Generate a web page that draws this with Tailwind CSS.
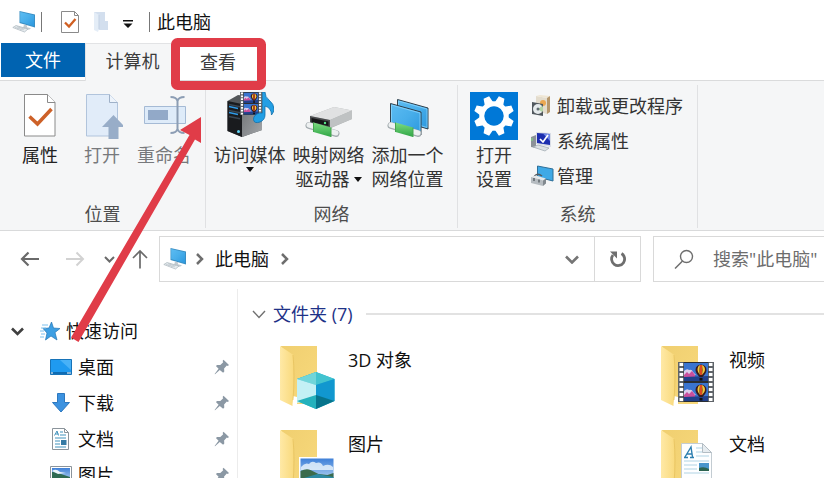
<!DOCTYPE html>
<html lang="zh-CN">
<head>
<meta charset="utf-8">
<meta name="viewport" content="width=device-width, initial-scale=1">
<title>此电脑</title>
<script src="https://cdn.jsdelivr.net/npm/@tailwindcss/browser@4"></script>
</head>
<body class="relative flex h-screen flex-col overflow-hidden bg-white font-['Open_Sans','Noto_Sans_CJK_SC',sans-serif] text-lg leading-6 text-[#111]">

<!-- Shared drawings -->
<svg class="absolute size-0" aria-hidden="true">
  <defs>
    <linearGradient id="screen" x1="0" y1="0" x2="1" y2="1"><stop offset="0" stop-color="#5cbcf2"/><stop offset=".5" stop-color="#48aeea"/><stop offset="1" stop-color="#2b97de"/></linearGradient>
    <linearGradient id="flap" x1="0" y1="0" x2="1" y2="0"><stop offset="0" stop-color="#ffe9a6"/><stop offset="1" stop-color="#f9da7e"/></linearGradient>
    <linearGradient id="back" x1="0" y1="0" x2="1" y2="1"><stop offset="0" stop-color="#f0cf70"/><stop offset="1" stop-color="#f8d97c"/></linearGradient>
    <linearGradient id="pipe" x1="0" y1="0" x2="0" y2="1"><stop offset="0" stop-color="#7ddc82"/><stop offset="1" stop-color="#2fa545"/></linearGradient>
    <linearGradient id="sky" x1="0" y1="0" x2="0" y2="1"><stop offset="0" stop-color="#3f80d8"/><stop offset="1" stop-color="#c4e0f7"/></linearGradient>
    <linearGradient id="tower" x1="0" y1="0" x2="1" y2="1"><stop offset="0" stop-color="#6c6f72"/><stop offset="1" stop-color="#a4a7aa"/></linearGradient>
    <symbol id="pc" viewBox="0 0 24 22">
      <path d="M7.500 0 23 3.500v13L7.500 12z" fill="#3a8fc4"/>
      <path d="M8.200 1 22 4.200v11L8.200 11z" fill="url(#screen)"/>
      <path d="M12 13.500l3 .8v2l4 1-2 1.500-6-1.600z" fill="#c3cbd1"/>
      <path d="M.8 16.500 4 14.500l12 3.500-3.500 3z" fill="#e7ecef" stroke="#a9b4bc" stroke-width=".7"/>
      <path d="M3 16.300l9 2.500M5 15.500l8 2.200M5 18l3-2M8 19l3-2" stroke="#b5bfc6" stroke-width=".6" fill="none"/>
    </symbol>
    <symbol id="folder" viewBox="0 0 38 64">
      <path d="M1 0h36v58H13z" fill="url(#back)"/>
      <path d="M13 50l4 1v10h-4z" fill="#fff"/>
      <path d="M0 0 13.500 9v39q0 4-1 6v6L0 54z" fill="url(#flap)"/>
      <path d="M13 9q2 20 0 45" stroke="#e4bf5a" stroke-width=".7" fill="none"/>
    </symbol>
    <symbol id="frame" viewBox="0 0 24 18">
      <path d="M0 0h24v18H0z" fill="#3a74cf"/>
      <path d="M0 8q3-3 5-1 3-1 4 2l3 3H0z" fill="#d9cdea"/>
      <path d="M0 12l3-3 2 2 3-3 3 4v2H0z" fill="#c94f9c"/>
      <path d="M0 14l24-1v5H0z" fill="#22408a"/>
      <path d="M11.500 7a5.500 5.500 0 0 1 11 0q0 3-4 7h-3q-4-4-4-7z" fill="#3a1c1c"/>
      <path d="M13.500 7q0-4 2.500-5-1 7 0 10-2.500-3-2.500-5zM18 2q3 1 3 5 0 2-3 5 1-5 0-10z" fill="#f5c63a"/>
      <path d="M16 2h2v10h-2z" fill="#dc4a22"/><path d="M15.500 15h3v2.500h-3z" fill="#111"/>
    </symbol>
    <symbol id="film" viewBox="0 0 36 40">
      <path d="M0 0h36v40H0z" fill="#5f6469"/>
      <path d="M3.500 1v38M32.500 1v38" stroke="#fff" stroke-width="4" stroke-dasharray="3 2"/>
      <path d="M5.500 0h25v40h-25z" fill="#2a2e33"/>
      <use href="#frame" x="6" y="1" width="24" height="18"/><use href="#frame" x="6" y="21" width="24" height="18"/>
    </symbol>
    <symbol id="photo" viewBox="0 0 36 28">
      <path d="M0 0h36v28H0z" fill="#fff"/><path d="M1.500 1.500h33v25h-33z" fill="url(#sky)"/>
      <path d="M2 10q4-5 8-3 3-4 7-1 5-2 7 3 6-3 10 1v3H2z" fill="#eef6fc" opacity=".8"/>
      <path d="M1.500 14q6-3 10-1l8 4 9 1 6-2v10h-33z" fill="#3b6b4c"/>
      <path d="M1.500 22l17-5 16 3v6.500h-33z" fill="#2c8aa3"/>
    </symbol>
    <symbol id="pin" viewBox="0 0 16 16">
      <path d="M9.500.8 15 6l-1.200 1-1-.4-2.700 3 .2 3-1.200 1.100L5.800 11 1 15.300.6 15l4-5.200L1.900 7l1.200-1.100 3.200.1L9.200 3.200 8.600 2z" fill="#8b98a4"/>
    </symbol>
    <symbol id="pipeline" viewBox="0 0 36 18">
      <path d="M4 4.500 31 12.500" stroke="#a3abaf" stroke-width="7" stroke-linecap="round"/>
      <path d="M4 4 31 12" stroke="#edf0f1" stroke-width="5" stroke-linecap="round"/>
      <path d="M8.500 1.500 26 6.500v9.500L8.500 11z" fill="url(#pipe)"/>
      <path d="M8.500 1.500v9.500M26 6.500v9.500" stroke="#45a44f" stroke-width="1"/>
    </symbol>
  </defs>
</svg>

<header class="flex h-[43px] shrink-0 items-center pl-3">
  <svg class="h-[22px] w-6"><use href="#pc"/></svg>
  <span class="ml-[5px] h-5 w-px bg-[#777]"></span>
  <button aria-label="属性" class="ml-[19px]">
    <svg class="h-[22px] w-[18px]" viewBox="0 0 18 22"><path d="M.5.500h13l4 4v17H.500z" fill="#fff" stroke="#8a8a8a"/><path d="M13.500.5v4h4" fill="none" stroke="#8a8a8a"/><path d="M4 11.500l4 4 6.500-7.500" fill="none" stroke="#d05f22" stroke-width="2.300"/></svg>
  </button>
  <button aria-label="新建文件夹" class="ml-[15px]">
    <svg class="h-5 w-[15px]" viewBox="0 0 15 20"><path d="M0 0h11v9h3v9H4z" fill="#d3dfee"/><path d="M0 0l5 3v14l-1 3-4-2z" fill="#e4edf7"/><path d="M5 3v14" stroke="#c3d1e3"/></svg>
  </button>
  <button aria-label="自定义快速访问工具栏" class="ml-[14px]">
    <svg class="mt-1 h-2 w-[10px]" viewBox="0 0 10 8"><path d="M0 0h10v1.500H0zM.5 3.500h9L5 8z" fill="#111"/></svg>
  </button>
  <span class="ml-4 h-5 w-px bg-[#777]"></span>
  <h1 class="ml-[7px]">此电脑</h1>
</header>

<nav class="flex h-[38px] shrink-0 text-[#3c3c3c]" aria-label="功能区选项卡">
  <div class="flex border-b border-[#dadbdc] pb-[3px] pl-px">
    <button class="w-[84px] bg-[#0063b1] text-white">文件</button>
  </div>
  <button class="w-[94px] border-l border-t border-[#e2e3e5] bg-[#f5f6f7] pb-[3px]">计算机</button>
  <button class="w-[78px] border-b border-[#dadbdc]">查看</button>
  <div class="flex-1 border-b border-[#dadbdc]"></div>
</nav>

<section class="flex h-[150px] shrink-0 border-b border-[#d9dadb] bg-[#f5f6f7] pt-1 pb-[2px] text-[#333]" aria-label="功能区">
  <div class="flex w-[206px] flex-col border-r border-[#e0e1e3] pt-[7px]">
    <div class="flex flex-1 pl-[9px]">
      <button class="flex w-[62px] flex-col items-center gap-[3px] text-[#222]">
        <svg class="h-12 w-9" viewBox="0 0 36 48"><path d="M2.500 2.500h23l7.500 8v33.500H2.500z" fill="#fff" stroke="#8a8a8a"/><path d="M25.500 2.500v8H33" fill="#fff" stroke="#8a8a8a"/><path d="M7.500 24.500l8 7.500 14-15" fill="none" stroke="#cd6128" stroke-width="3.500"/></svg>
        <span>属性</span>
      </button>
      <button class="flex w-[62px] flex-col items-center gap-[3px] text-[#77797c]">
        <svg class="h-12 w-[42px]" viewBox="0 0 42 48"><path d="M5.500 2.500h23l8 8v33.500h-31z" fill="#e1ecf9" stroke="#b1c4dc"/><path d="M28.500 2.500v8h8" fill="#eef4fb" stroke="#9fb1c8"/><path d="M32.500 23 44 35h-6.500v12h-10V35H21z" fill="#98adc8"/></svg>
        <span>打开</span>
      </button>
      <button class="flex w-[62px] flex-col items-center gap-[3px] text-[#77797c]">
        <svg class="h-12 w-[44px]" viewBox="0 0 44 48"><path d="M2.500 14.500h41v17h-41z" fill="#deebf9" stroke="#a5bad5"/><path d="M6 18h20v10H6z" fill="#92a9c8"/><path d="M28.500 5q6 0 7 4v28q-1 4-7 4M42.500 5q-6 0-7 4v28q1 4 7 4" fill="none" stroke="#8c9db4" stroke-width="2"/></svg>
        <span>重命名</span>
      </button>
    </div>
    <h2 class="pb-[2px] text-center text-[#4d4d4d]">位置</h2>
  </div>

  <div class="flex w-[252px] flex-col border-r border-[#e0e1e3] pt-[7px]">
    <div class="flex flex-1 pl-1">
      <button class="flex w-[79px] flex-col items-center gap-[3px]">
        <svg class="h-12 w-12" viewBox="0 0 48 48">
          <path d="M1.500 9 12 3l24 3v32L16 45 1.500 39z" fill="#55585b"/><path d="M16 12l20-5v31l-20 7z" fill="url(#tower)"/><path d="M1.500 9 16 12v33L1.500 39z" fill="#191b1e"/>
          <path d="M3 12.500l11 2.300M3 18.500l11 2.300M3 24.500l11 2.300" stroke="#3a4652" stroke-width="1.500"/><path d="M3 14.500l9 2M3 20.500l9 2" stroke="#2f9be8" stroke-width="1.300"/><circle cx="12.500" cy="39.500" r="1.500" fill="#5ed3f5"/>
          <svg x="14" y="0" width="22" height="23" preserveAspectRatio="none" viewBox="0 0 36 40"><use href="#film" width="36" height="40"/></svg>
          <path d="M36.500 0h2.500q0 5 4 8 5 4 5 9 0 3-2.500 6 0-7-6.500-9v9q0 5-5 7-6 2-6.500-2.500 0-5 6-6.500h3z" fill="#239fe4" stroke="#0f6fab" stroke-width=".8"/>
        </svg>
        <span class="flex flex-col items-center">访问媒体<svg class="h-[5px] w-2" viewBox="0 0 8 5"><path d="M0 0h8L4 5z" fill="#111"/></svg></span>
      </button>
      <button class="flex w-[79px] flex-col items-center gap-[3px]">
        <svg class="h-12 w-12" viewBox="0 0 48 48">
          <path d="M5 24 29 15l18 3.500V27L26 36 5 31z" fill="#aeb1b2"/><path d="M5 24 29 15l18 3.500L25 28z" fill="#e0e1e2"/><path d="M25 28l22-9.500V27L25 36z" fill="#bfc2c3"/><path d="M5 24l20 4v8L5 31.500z" fill="#4b4d4f"/><path d="M6.500 26l17 3.500v4.500L6.500 30z" fill="#151617"/><circle cx="20" cy="31" r="1.200" fill="#59e38a"/>
          <use href="#pipeline" x="0" y="29" width="36" height="18"/>
        </svg>
        <span>映射网络<br><span class="flex items-center justify-center gap-1">驱动器<svg class="h-[5px] w-2" viewBox="0 0 8 5"><path d="M0 0h8L4 5z" fill="#111"/></svg></span></span>
      </button>
      <button class="flex w-[79px] flex-col items-center gap-[3px]">
        <svg class="h-12 w-12" viewBox="0 0 48 48">
          <path d="M13.500 7.500 44 16v21L13.500 28z" fill="url(#screen)" stroke="#31404b"/><path d="M14.500 9 43 17v18.500L14.500 27z" fill="none" stroke="#92d9ff" stroke-width=".7"/>
          <path d="M6.500 11.500 37 20v23L6.500 34z" fill="url(#screen)" stroke="#31404b"/><path d="M7.500 13 36 21v20.500L7.500 33.300z" fill="none" stroke="#92d9ff" stroke-width=".7"/>
          <use href="#pipeline" x="3" y="29" width="36" height="18"/>
        </svg>
        <span>添加一个<br>网络位置</span>
      </button>
    </div>
    <h2 class="pb-[2px] text-center text-[#4d4d4d]">网络</h2>
  </div>

  <div class="flex w-[240px] flex-col border-r border-[#e0e1e3] pt-[7px]">
    <div class="flex flex-1 items-start pl-3">
      <button class="flex w-12 flex-col items-center gap-[3px]">
        <svg class="size-12" viewBox="0 0 48 48">
          <path d="M0 0h48v48H0z" fill="#0078d7"/>
          <g transform="translate(24 24) rotate(22.500)" fill="#fff">
            <g id="teeth"><path d="M-4.500-13-3-20h6L4.500-13zM-4.500 13l1.500 7h6l1.500-7zM-13-4.500l-7 1.500v6l7 1.500zM13-4.500l7 1.500v6l-7 1.500z"/></g>
            <use href="#teeth" transform="rotate(45)"/>
            <circle r="12.200" fill="none" stroke="#fff" stroke-width="5"/>
          </g>
        </svg>
        <span>打开<br>设置</span>
      </button>
      <div class="flex flex-col gap-[11px] pt-[2px] pl-3">
        <button class="flex items-center gap-[3px]">
          <svg class="h-[22px] w-6" viewBox="0 0 24 22"><path d="M6 1l11 2v16l-11-3z" fill="#e3dccd"/><path d="M6 1l4-1 10 1-3 2z" fill="#efe6d4"/><path d="M17 3l3-2v16l-3 2z" fill="#b6976b"/><circle cx="13" cy="8" r="3" fill="#eba851"/><path d="M2 7l11 2v12L2 19z" fill="#51585e"/><circle cx="8" cy="14" r="5" fill="#e5eaec"/><path d="M8 14l4-3a5 5 0 0 1 0 6z" fill="#b2d5a4"/><circle cx="8" cy="14" r="1.500" fill="#626b72"/></svg>
          卸载或更改程序
        </button>
        <button class="flex items-center gap-[3px]">
          <svg class="h-[22px] w-6" viewBox="0 0 24 22"><path d="M1 7l5-2v13l-5-1z" fill="#8b9198"/><path d="M2 8v3" stroke="#7fe07f"/><path d="M6 2l15 1v14L6 14z" fill="#d9dde6"/><path d="M7 3l13 1v11L7 13z" fill="#1c2eaf"/><path d="M13 3.500l7 .5v7z" fill="#6d86e8"/><path d="M10 9l3 3 5-7" fill="none" stroke="#fff" stroke-width="1.700"/><path d="M3 17l5-2 11 3-4 3z" fill="#dce1e5" stroke="#9ca6ae" stroke-width=".7"/></svg>
          系统属性
        </button>
        <button class="flex items-center gap-[3px]">
          <svg class="h-[22px] w-6" viewBox="0 0 24 22"><path d="M7.500 1 23 4v12L7.500 12z" fill="#3fa9e6" stroke="#2e6f98"/><path d="M4 12q3-5 8-1" fill="none" stroke="#535b61" stroke-width="1.500"/><path d="M1 12l5-1.500 10 3-3 2.500z" fill="#e5e8ea"/><path d="M1 12l12 3.500V21L1 18z" fill="#b6bcc1"/><path d="M13 15.500l3-2v5l-3 2.500z" fill="#81898f"/><path d="M4 13v3M9 14.500v3" stroke="#50585e" stroke-width="1.300"/></svg>
          管理
        </button>
      </div>
    </div>
    <h2 class="pb-[2px] text-center text-[#4d4d4d]">系统</h2>
  </div>
</section>

<div class="flex h-[58px] shrink-0 items-start pt-[5px]">
  <div class="flex h-[46px] w-[159px] items-center pl-5">
    <button aria-label="后退"><svg class="h-4 w-5" viewBox="0 0 20 16"><path d="M19 8H2M8.500 1.500 2 8l6.500 6.500" fill="none" stroke="#6a6a6a" stroke-width="2.200"/></svg></button>
    <button aria-label="前进" class="ml-[25px]"><svg class="h-4 w-5" viewBox="0 0 20 16"><path d="M1 8h17M11.500 1.500 18 8l-6.500 6.500" fill="none" stroke="#d2d2d2" stroke-width="2"/></svg></button>
    <button aria-label="最近浏览的位置" class="ml-[19px]"><svg class="h-[7px] w-[11px]" viewBox="0 0 11 7"><path d="M1 1l4.500 4.500L10 1" fill="none" stroke="#6a6a6a" stroke-width="2"/></svg></button>
    <button aria-label="上移" class="ml-[17px]"><svg class="h-5 w-4" viewBox="0 0 16 20"><path d="M8 19.500V2M1 9l7-7 7 7" fill="none" stroke="#6a6a6a" stroke-width="1.700"/></svg></button>
  </div>
  <div class="flex h-[46px] min-w-[482px] flex-[482] items-center border border-[#d9d9d9] pl-[3px]">
    <svg class="h-[22px] w-6"><use href="#pc"/></svg>
    <svg class="ml-[9px] h-3 w-2" viewBox="0 0 8 12"><path d="M1 1l5 5-5 5" fill="none" stroke="#6e6e6e" stroke-width="2.500"/></svg>
    <a href="#" class="ml-[11px]">此电脑</a>
    <svg class="ml-3 h-3 w-2" viewBox="0 0 8 12"><path d="M1 1l5 5-5 5" fill="none" stroke="#6e6e6e" stroke-width="2.500"/></svg>
    <button aria-label="以前的位置" class="ml-auto flex w-11 justify-center"><svg class="h-[9px] w-[14px]" viewBox="0 0 14 9"><path d="M1 1.500l6 6 6-6" fill="none" stroke="#757575" stroke-width="2.600"/></svg></button>
    <button aria-label="刷新" class="flex h-full w-[46px] items-center justify-center border-l border-[#d9d9d9]"><svg class="h-[18px] w-[18px]" viewBox="0 0 18 18"><path d="M12.500 3.500A6.500 6.500 0 1 1 4 5" fill="none" stroke="#6e6e6e" stroke-width="2.800"/><path d="M1 1.500h7v7L5.500 6z" fill="#6e6e6e"/></svg></button>
  </div>
  <label class="ml-3 flex h-[46px] min-w-0 flex-[171] items-center gap-[19px] overflow-hidden border border-r-0 border-[#d9d9d9] pl-5">
    <svg class="h-5 w-5 shrink-0" viewBox="0 0 20 20"><circle cx="12.500" cy="7.500" r="6" fill="none" stroke="#6e6e6e" stroke-width="1.400"/><path d="M8.500 12 1 19.500" stroke="#6e6e6e" stroke-width="1.500"/></svg>
    <input type="text" aria-label="搜索" placeholder="搜索&quot;此电脑&quot;" class="h-6 min-w-0 flex-1 outline-none placeholder:text-[#6d6d6d]">
  </label>
</div>

<main class="flex min-h-0 flex-1">
  <nav class="w-[238px] shrink-0 overflow-hidden border-r border-[#ececec] pt-6" aria-label="导航窗格">
    <a href="#" class="flex h-9 items-center pl-[11px]">
      <svg class="h-[9px] w-[13px]" viewBox="0 0 13 9"><path d="M1 1.500 6.500 7 12 1.500" fill="none" stroke="#404040" stroke-width="2.600"/></svg>
      <svg class="ml-4 h-5 w-5" viewBox="0 0 20 20"><path d="M11.500 1l2 6 6.500.5-5 4 2 7.500-6-4-5.500 4 1.500-7-4-4.500 6-.5z" fill="#3d9fe3" stroke="#2476b5" stroke-width=".7"/><path d="M2 4h6M1 7h5M0 10h4M1 13h4M0 16h4" stroke="#7cc0ed"/></svg>
      <span class="ml-[6px]">快速访问</span>
    </a>
    <a href="#" class="flex h-9 items-center pr-[7px] pl-[49px]">
      <svg class="h-[22px] w-6" viewBox="0 0 24 22"><path d="M1.500 3.500h21v15h-21z" fill="#1f9af0" stroke="#1773b8"/><path d="M11 4h11v10z" fill="#48b1f7"/><path d="M2 17h20" stroke="#0b5c9f" stroke-width="1.500"/><path d="M2 17h2M18 17h4" stroke="#fff"/></svg>
      <span class="ml-[5px]">桌面</span><svg class="ml-auto size-4"><use href="#pin"/></svg>
    </a>
    <a href="#" class="flex h-9 items-center pr-[7px] pl-[49px]">
      <svg class="h-[22px] w-6" viewBox="0 0 24 22"><path d="M8.500 1.500h7v9h5L12 20l-8.500-9.500h5z" fill="#3c92e0" stroke="#2d78bf"/></svg>
      <span class="ml-[5px]">下载</span><svg class="ml-auto size-4"><use href="#pin"/></svg>
    </a>
    <a href="#" class="flex h-9 items-center pr-[7px] pl-[49px]">
      <svg class="h-[22px] w-6" viewBox="0 0 24 22"><path d="M3.500.500h12l4 4v17h-16z" fill="#fff" stroke="#8b949b"/><path d="M15.500.5v4h4" fill="none" stroke="#8b949b"/><path d="M5.500 7.500 8 3l1.500 4.500M6.500 6h3M11 4h3M11 7h6M6 10h11M6 13h5M6 16h5M6 19h11" fill="none" stroke="#4193bd"/><path d="M12 12h5.500v5H12z" fill="#367ba5"/></svg>
      <span class="ml-[5px]">文档</span><svg class="ml-auto size-4"><use href="#pin"/></svg>
    </a>
    <a href="#" class="flex h-9 items-center pr-[7px] pl-[49px]">
      <svg class="h-[18px] w-6" viewBox="0 0 24 18"><path d="M1.500.500h21v17h-21z" fill="#fff" stroke="#8b949b"/><path d="M3 2h18v14H3z" fill="url(#sky)"/><path d="M3 6q7 0 9 2l9 3v5H3z" fill="#2f6b53"/><path d="M3 5q4-3 8 1l6 1-8 1z" fill="#eef6fb"/></svg>
      <span class="ml-[5px]">图片</span><svg class="ml-auto size-4"><use href="#pin"/></svg>
    </a>
  </nav>

  <section class="min-w-0 flex-1 overflow-hidden pt-[13px] pl-[14px]">
    <h2 class="flex items-center text-[#1e3287]">
      <svg class="h-[9px] w-[14px]" viewBox="0 0 14 9"><path d="M1 1l6 6.500L13 1" fill="none" stroke="#707070" stroke-width="1.400"/></svg>
      <span class="ml-[7px]">文件夹 (7)</span>
      <span class="ml-[13px] h-[2px] flex-1 bg-[#e2e2e2]"></span>
    </h2>
    <ul class="grid grid-cols-[381px_381px] gap-y-5 pt-5 pl-7">
      <li><a href="#" class="flex gap-3">
        <svg class="h-16 w-14" viewBox="0 0 56 64"><use href="#folder" width="38" height="64"/><path d="M36 26l18.500 7v22L36 63l-19-8V33z" fill="#24b3cd"/><path d="M36 26l18.500 7L36 39l-19-6z" fill="#42c3cf"/><path d="M36 26v13l-19-6z" fill="#70d5d9"/><path d="M17 33l19 6v14l-19 4z" fill="#c3f0f5"/><path d="M36 39l18.500-6v22L36 50z" fill="#1197cf"/><path d="M17 55l19-6v14z" fill="#24b1bc"/><path d="M36 49l18.500 6L36 63z" fill="#07748c"/></svg>
        <span class="pt-[2px]">3D 对象</span></a></li>
      <li><a href="#" class="flex gap-3">
        <svg class="h-16 w-14" viewBox="0 0 56 64"><use href="#folder" width="38" height="64"/><use href="#film" x="17" y="16" width="36" height="40"/></svg>
        <span class="pt-[2px]">视频</span></a></li>
      <li><a href="#" class="flex gap-3">
        <svg class="h-16 w-14" viewBox="0 0 56 64"><use href="#folder" width="38" height="64"/><use href="#photo" x="19" y="27" width="36" height="28"/></svg>
        <span class="pt-[2px]">图片</span></a></li>
      <li><a href="#" class="flex gap-3">
        <svg class="h-16 w-14" viewBox="0 0 56 64"><use href="#folder" width="38" height="64"/><path d="M20.500 13.500h21l9 9V58h-30z" fill="#fdfeff" stroke="#c3ccd2"/><path d="M41.500 13.500v9h9z" fill="#e6ecf0" stroke="#b3bdc4"/><path d="M24 27l6-10 1.500 10M26 24h5M23 27.500h4M29 27.500h4" fill="none" stroke="#2d7fb0" stroke-width="1.400"/><path d="M35 18h6M35 22h6M35 26h13M23 31h25M23 35h13M23 39h13M23 43h25" stroke="#b0d3e4"/><path d="M38 33h10v8H38z" fill="#4a96cc"/><path d="M38 38q5-2 10 1v2H38z" fill="#2c6451"/></svg>
        <span class="pt-[2px]">文档</span></a></li>
    </ul>
  </section>
</main>

<!-- Annotation: highlights the tab and points to it -->
<svg class="pointer-events-none absolute top-0 left-0 h-[350px] w-[270px]" viewBox="0 0 270 350" aria-hidden="true">
  <rect x="175.500" y="42.500" width="86" height="43" rx="2" fill="none" stroke="#e03c48" stroke-width="9" stroke-linejoin="round"/>
  <path d="M201 117v26l-6-3.500L78.500 342 71 337.500 189.500 135l-9.500-5z" fill="#e03c48"/>
</svg>
</body>
</html>
